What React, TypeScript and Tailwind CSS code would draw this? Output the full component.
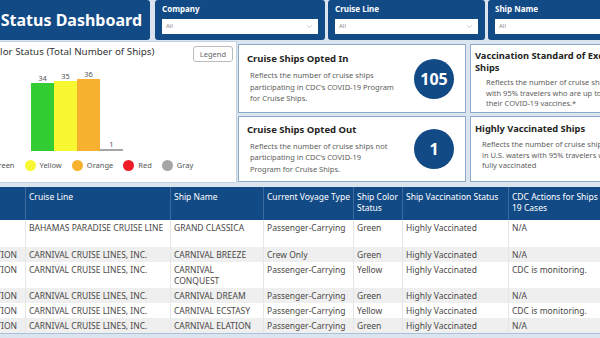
import { ChevronDown } from "lucide-react";

const rows = [
  { corp: "", line: "BAHAMAS PARADISE CRUISE LINE", ship: "GRAND CLASSICA", voyage: "Passenger-Carrying", color: "Green", vax: "Highly Vaccinated", cdc: "N/A", tall: true },
  { corp: "CARNIVAL CORPORATION", line: "CARNIVAL CRUISE LINES, INC.", ship: "CARNIVAL BREEZE", voyage: "Crew Only", color: "Green", vax: "Highly Vaccinated", cdc: "N/A" },
  { corp: "CARNIVAL CORPORATION", line: "CARNIVAL CRUISE LINES, INC.", ship: "CARNIVAL\nCONQUEST", voyage: "Passenger-Carrying", color: "Yellow", vax: "Highly Vaccinated", cdc: "CDC is monitoring." },
  { corp: "CARNIVAL CORPORATION", line: "CARNIVAL CRUISE LINES, INC.", ship: "CARNIVAL DREAM", voyage: "Passenger-Carrying", color: "Green", vax: "Highly Vaccinated", cdc: "N/A" },
  { corp: "CARNIVAL CORPORATION", line: "CARNIVAL CRUISE LINES, INC.", ship: "CARNIVAL ECSTASY", voyage: "Passenger-Carrying", color: "Yellow", vax: "Highly Vaccinated", cdc: "CDC is monitoring." },
  { corp: "CARNIVAL CORPORATION", line: "CARNIVAL CRUISE LINES, INC.", ship: "CARNIVAL ELATION", voyage: "Passenger-Carrying", color: "Green", vax: "Highly Vaccinated", cdc: "N/A" },
];

const bars = [
  { n: 34, cls: "bg-[#33cc33]" },
  { n: 35, cls: "bg-[#f7f732]" },
  { n: 36, cls: "bg-[#f7b12f]" },
  { n: 1, cls: "bg-[#a6a6a6]" },
];

const legend = [
  { name: "Green", cls: "bg-[#33cc33]" },
  { name: "Yellow", cls: "bg-[#f7f732]" },
  { name: "Orange", cls: "bg-[#f7b12f]" },
  { name: "Red", cls: "bg-[#ee1c25]" },
  { name: "Gray", cls: "bg-[#a6a6a6]" },
];

function Filter({ label, className }: { label: string; className: string }) {
  return (
    <div className={`shrink-0 bg-[#124a86] rounded-[3px] pl-[7px] pt-[4px] ${className}`}>
      <div className="text-[8px] font-bold leading-[10px] text-white">{label}</div>
      <div className="mt-[5px] mr-[7px] flex h-[15px] items-center justify-between bg-white pl-[4px] pr-[4px]">
        <span className="text-[6px] text-[#888]">All</span>
        <ChevronDown size={9} strokeWidth={1.5} className="text-[#aaa]" />
      </div>
    </div>
  );
}

function Card({ title, lines, value, className }: { title: string; lines: string[]; value: string; className: string }) {
  return (
    <div className={`flex items-center justify-between border border-[#8ea9c8] bg-white pl-[8px] pr-[11px] ${className}`}>
      <div>
        <div className="text-[9.5px] font-bold leading-[13px] text-[#252423]">{title}</div>
        <div className="mt-[5px] pl-[3px] text-[7.5px] leading-[11.5px] text-[#605e5c]">
          {lines.map((l) => (
            <div key={l}>{l}</div>
          ))}
        </div>
      </div>
      <div className="flex h-[40px] w-[40px] items-center justify-center rounded-full bg-[#124a86] text-[16px] font-bold text-white">
        {value}
      </div>
    </div>
  );
}

function WideCard({ title, lines, className, descPad }: { title: string[]; lines: string[]; className: string; descPad: string }) {
  return (
    <div className={`border border-[#8ea9c8] bg-white pl-[4px] ${className}`}>
      <div className="whitespace-nowrap text-[9.3px] font-bold leading-[12px] text-[#252423]">
        {title.map((t) => (
          <div key={t}>{t}</div>
        ))}
      </div>
      <div className={`mt-[3px] whitespace-nowrap text-[7.5px] leading-[10.5px] text-[#605e5c] ${descPad}`}>
        {lines.map((l) => (
          <div key={l}>{l}</div>
        ))}
      </div>
    </div>
  );
}

export default function App() {
  const cols = ["w-[25px]", "w-[145px]", "w-[93px]", "w-[90px]", "w-[49px]", "w-[106px]", "w-[160px]"];
  const headers = ["", "Cruise Line", "Ship Name", "Current Voyage Type", "Ship Color\nStatus", "Ship Vaccination Status", "CDC Actions for Ships with COVID-\n19 Cases"];

  return (
    <div className="flex h-[338px] w-[600px] flex-col overflow-hidden bg-[#dbe5ef] font-['Noto_Sans',sans-serif]">
      {/* top bar */}
      <div className="flex h-[40px] shrink-0">
        <div className="flex w-[150px] shrink-0 items-center justify-end overflow-hidden rounded-r-[3px] bg-[#124a86] pr-[8px]">
          <span className="whitespace-nowrap text-[16px] font-bold text-white">Ship Info Status Dashboard</span>
        </div>
        <Filter label="Company" className="ml-[5px] w-[170px]" />
        <Filter label="Cruise Line" className="ml-[3px] w-[157px]" />
        <Filter label="Ship Name" className="ml-[3px] w-[160px]" />
      </div>

      {/* middle */}
      <div className="mt-[1px] flex h-[142px] shrink-0">
        <div className="flex w-[237px] shrink-0 flex-col overflow-hidden border border-l-0 border-[#c3d3e3] bg-white">
          <div className="flex items-start justify-between pr-[3px] pt-[4px]">
            <span className="ml-[-12px] whitespace-nowrap text-[9.8px] leading-[12px] text-[#333]">Color Status (Total Number of Ships)</span>
            <span className="rounded-[3px] border border-[#bbb] px-[6px] text-[7.5px] leading-[14px] text-[#666]">Legend</span>
          </div>
          <div className="ml-[31px] mt-[-1px] flex h-[90px] items-end">
            {bars.map((b) => (
              <div key={b.n} className="flex w-[23px] flex-col items-center">
                <span className="text-[7.5px] leading-[10px] text-[#555]">{b.n}</span>
                <div className={`w-full ${b.cls}`} style={{ height: b.n * 2 }} />
              </div>
            ))}
          </div>
          <div className="ml-[-22px] mt-[9px] flex items-center text-[7.5px] text-[#555]">
            {legend.map((l) => (
              <div key={l.name} className="mr-[10px] flex items-center">
                <span className={`mr-[4px] h-[11px] w-[11px] rounded-full ${l.cls}`} />
                <span>{l.name}</span>
              </div>
            ))}
          </div>
        </div>

        <div className="ml-[1px] flex w-[228px] shrink-0 flex-col gap-[3px] pt-[3px]">
          <Card
            className="h-[69px]"
            title="Cruise Ships Opted In"
            value="105"
            lines={["Reflects the number of cruise ships", "participating in CDC's COVID-19 Program", "for Cruise Ships."]}
          />
          <Card
            className="h-[66px]"
            title="Cruise Ships Opted Out"
            value="1"
            lines={["Reflects the number of cruise ships not", "participating in CDC's COVID-19", "Program for Cruise Ships."]}
          />
        </div>

        <div className="ml-[4px] flex w-[160px] shrink-0 flex-col gap-[3px] pt-[3px]">
          <WideCard
            className="h-[69px] pt-[5px]"
            descPad="pl-[11px]"
            title={["Vaccination Standard of Excellence", "Ships"]}
            lines={["Reflects the number of cruise ships", "with 95% travelers who are up to date with", "their COVID-19 vaccines.*"]}
          />
          <WideCard
            className="h-[66px] pt-[6px]"
            descPad="pl-[7px] mt-[4px]"
            title={["Highly Vaccinated Ships"]}
            lines={["Reflects the number of cruise ships", "in U.S. waters with 95% travelers who are", "fully vaccinated"]}
          />
        </div>
      </div>

      {/* table */}
      <div className="mt-[4px] border-b border-[#a9c2dc] bg-white text-[8.5px]">
        <div className="flex h-[33px] bg-[#124a86] text-white">
          {headers.map((h, i) => (
            <div
              key={i}
              className={`${cols[i]} shrink-0 whitespace-pre-line border-l border-[#3b6b9e] pl-[3px] pt-[4px] leading-[11px] first:border-l-0`}
            >
              {h}
            </div>
          ))}
        </div>
        {rows.map((r, ri) => {
          const cells = [r.corp, r.line, r.ship, r.voyage, r.color, r.vax, r.cdc];
          return (
            <div key={ri} className={`flex text-[#4a4846] ${ri % 2 === 1 ? "bg-[#efefef]" : "bg-white"} ${r.tall ? "h-[27px]" : ""}`}>
              {cells.map((c, i) =>
                i === 0 ? (
                  <div key={i} className="flex w-[25px] shrink-0 justify-end overflow-hidden whitespace-nowrap pr-[8px] pt-[2px] pb-[2px] leading-[11px]">
                    {c}
                  </div>
                ) : (
                  <div
                    key={i}
                    className={`${cols[i]} shrink-0 whitespace-pre-line border-l border-[#e6e6e6] pl-[3px] pt-[2px] pb-[2px] leading-[11px]`}
                  >
                    {c}
                  </div>
                ),
              )}
            </div>
          );
        })}
      </div>
    </div>
  );
}
